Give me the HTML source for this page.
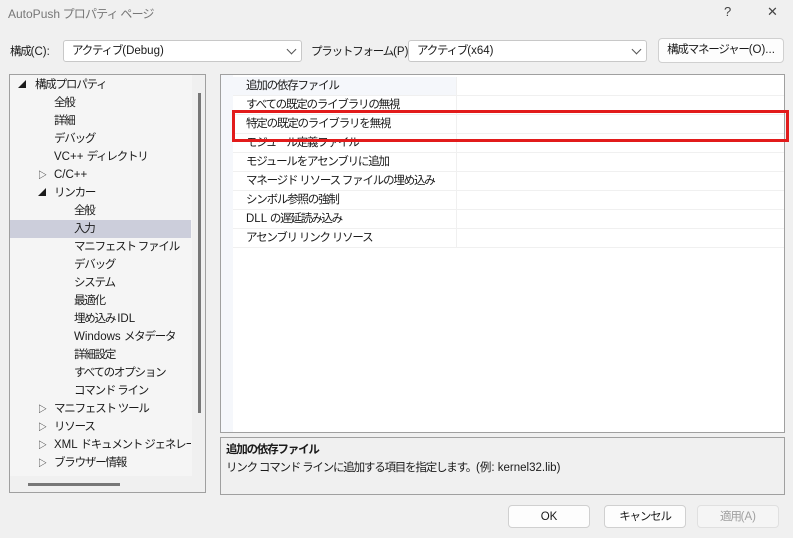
<html><head><style>
body{margin:0;width:793px;height:538px;background:#f0f0f0;font-family:"Liberation Sans","Noto Sans CJK JP",sans-serif;font-size:11.5px;letter-spacing:-1.2px;color:#1a1a1a;position:relative;overflow:hidden}
b.l,.l{letter-spacing:0;font-weight:inherit}
.a{position:absolute;white-space:nowrap}
.combo{position:absolute;background:#fff;border:1px solid #c8c8c8;border-radius:3px;height:22px;box-sizing:border-box;line-height:20px;padding-left:8px}
.chev{position:absolute;right:6px;top:5px;width:6px;height:6px;border-right:1px solid #555;border-bottom:1px solid #555;transform:rotate(45deg)}
.btn{position:absolute;background:#fdfdfd;border:1px solid #d0d0d0;border-radius:4px;box-sizing:border-box;text-align:center;line-height:22px}
.t{position:absolute;height:18px;line-height:18px;white-space:nowrap}
.row{position:absolute;left:12px;width:551px;height:19px;border-bottom:1px solid #f0f0f0;box-sizing:border-box;overflow:hidden}
.row span{position:absolute;left:13px;top:0;line-height:18px}
.row i{position:absolute;left:223px;top:0;bottom:-1px;border-left:1px solid #f0f0f0}
</style></head><body>
<div class="a" style="left:8px;top:5px;color:#777;font-size:12px;letter-spacing:-0.8px"><b class="l">AutoPush</b> プロパティ ページ</div>
<div class="a" style="left:724px;top:4px;color:#444;font-size:13px">?</div>
<div class="a" style="left:767px;top:4px;color:#444;font-size:13px">✕</div>
<div class="a" style="left:10px;top:43px">構成<b class="l">(C):</b></div>
<div class="combo" style="left:63px;top:40px;width:239px">アクティブ<b class="l">(Debug)</b><div class="chev"></div></div>
<div class="a" style="left:311px;top:43px">プラットフォーム<b class="l">(P):</b></div>
<div class="combo" style="left:408px;top:40px;width:239px">アクティブ<b class="l">(x64)</b><div class="chev"></div></div>
<div class="btn" style="left:658px;top:38px;width:126px;height:25px;line-height:23px">構成マネージャー<b class="l">(O)...</b></div>

<div class="a" style="left:9px;top:74px;width:197px;height:419px;background:#f5f5f5;border:1px solid #a0a0a0;box-sizing:border-box;overflow:hidden">
<div style="position:absolute;left:0;top:145px;width:181px;height:18px;background:#cccedb"></div>
<div style="position:absolute;left:0;top:0;width:181px;height:400px;overflow:hidden">
<div class="t" style="left:8px;top:1px;font-size:8px">◢</div><div class="t" style="left:25px;top:1px">構成プロパティ</div>
<div class="t" style="left:44px;top:19px">全般</div>
<div class="t" style="left:44px;top:37px">詳細</div>
<div class="t" style="left:44px;top:55px">デバッグ</div>
<div class="t" style="left:44px;top:73px"><b class="l">VC++ </b>ディレクトリ</div>
<div class="t" style="left:28px;top:91px;font-size:9px">▷</div><div class="t l" style="left:44px;top:91px">C/C++</div>
<div class="t" style="left:28px;top:109px;font-size:8px">◢</div><div class="t" style="left:44px;top:109px">リンカー</div>
<div class="t" style="left:64px;top:127px">全般</div>
<div class="t" style="left:64px;top:145px">入力</div>
<div class="t" style="left:64px;top:163px">マニフェスト ファイル</div>
<div class="t" style="left:64px;top:181px">デバッグ</div>
<div class="t" style="left:64px;top:199px">システム</div>
<div class="t" style="left:64px;top:217px">最適化</div>
<div class="t" style="left:64px;top:235px">埋め込み <b class="l">IDL</b></div>
<div class="t" style="left:64px;top:253px"><b class="l">Windows </b>メタデータ</div>
<div class="t" style="left:64px;top:271px">詳細設定</div>
<div class="t" style="left:64px;top:289px">すべてのオプション</div>
<div class="t" style="left:64px;top:307px">コマンド ライン</div>
<div class="t" style="left:28px;top:325px;font-size:9px">▷</div><div class="t" style="left:44px;top:325px">マニフェスト ツール</div>
<div class="t" style="left:28px;top:343px;font-size:9px">▷</div><div class="t" style="left:44px;top:343px">リソース</div>
<div class="t" style="left:28px;top:361px;font-size:9px">▷</div><div class="t" style="left:44px;top:361px"><b class="l">XML </b>ドキュメント ジェネレーター</div>
<div class="t" style="left:28px;top:379px;font-size:9px">▷</div><div class="t" style="left:44px;top:379px">ブラウザー情報</div>
</div>
<div style="position:absolute;left:182px;top:0;width:14px;height:406px;background:#f0f0f0"></div>
<div style="position:absolute;left:188px;top:18px;width:3px;height:320px;background:#777"></div>
<div style="position:absolute;left:0;top:401px;width:196px;height:17px;background:#f0f0f0"></div>
<div style="position:absolute;left:18px;top:408px;width:92px;height:3px;background:#777"></div>
</div>

<div class="a" style="left:220px;top:74px;width:565px;height:359px;background:#fff;border:1px solid #a0a0a0;box-sizing:border-box;overflow:hidden">
<div style="position:absolute;left:0;top:0;width:12px;height:357px;background:#f5f7fb"></div>
<div class="row" style="top:2px;background:linear-gradient(90deg,#f5f7fb 223px,#fff 223px)"><span>追加の依存ファイル</span><i></i></div>
<div class="row" style="top:21px"><span>すべての既定のライブラリの無視</span><i></i></div>
<div class="row" style="top:40px"><span>特定の既定のライブラリを無視</span><i></i></div>
<div class="row" style="top:59px"><span>モジュール定義ファイル</span><i></i></div>
<div class="row" style="top:78px"><span>モジュールをアセンブリに追加</span><i></i></div>
<div class="row" style="top:97px"><span>マネージド リソース ファイルの埋め込み</span><i></i></div>
<div class="row" style="top:116px"><span>シンボル参照の強制</span><i></i></div>
<div class="row" style="top:135px"><span><b class="l">DLL </b>の遅延読み込み</span><i></i></div>
<div class="row" style="top:154px"><span>アセンブリ リンク リソース</span><i></i></div>
</div>
<div class="a" style="left:232px;top:110px;width:557px;height:32px;border:3px solid #e21b1b;box-sizing:border-box"></div>

<div class="a" style="left:220px;top:437px;width:565px;height:58px;border:1px solid #a0a0a0;box-sizing:border-box;background:#f0f0f0">
<div class="a" style="left:5px;top:3px;font-weight:bold">追加の依存ファイル</div>
<div class="a" style="left:5px;top:21px">リンク コマンド ラインに追加する項目を指定します。<b class="l">(例: kernel32.lib)</b></div>
</div>
<div class="btn l" style="left:508px;top:505px;width:82px;height:23px">OK</div>
<div class="btn" style="left:604px;top:505px;width:82px;height:23px">キャンセル</div>
<div class="btn" style="left:697px;top:505px;width:82px;height:23px;background:#f5f5f5;color:#a0a0a0;border-color:#e0e0e0">適用<b class="l">(A)</b></div>
</body></html>
